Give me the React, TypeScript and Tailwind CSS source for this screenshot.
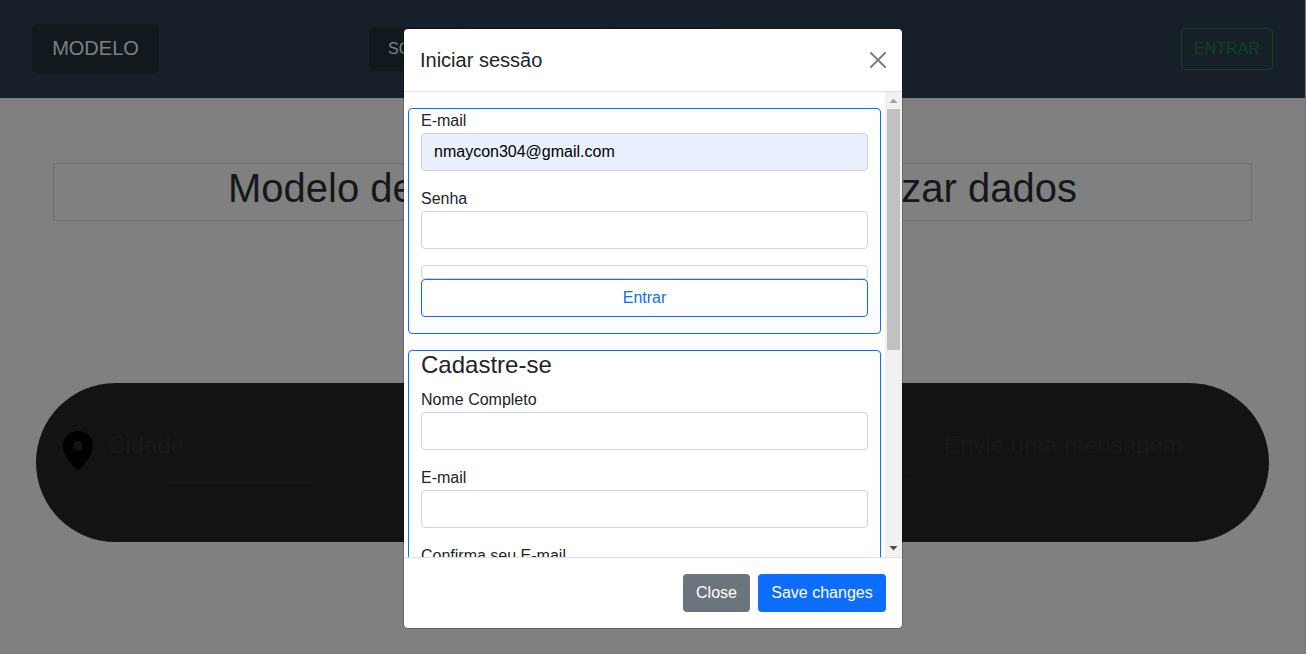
import React from "react";

function Field({ label, value }: { label: string; value?: string }) {
  return (
    <div className="mb-4">
      <label className="block h-6 leading-6">{label}</label>
      <div
        className={
          value
            ? "h-[38px] rounded border border-[#ced4da] bg-[#e8f0fe] px-3 py-1.5 leading-6 text-black"
            : "h-[38px] rounded border border-[#ced4da] bg-white"
        }
      >
        {value}
      </div>
    </div>
  );
}

function NavBar() {
  return (
    <header className="flex h-[98px] items-start bg-[#171f28] pl-8 pr-8 text-[#808080]">
      <div className="mt-6 flex h-[50px] w-[127px] items-center justify-center rounded-md bg-[#11191f] pb-0.5 text-xl">
        MODELO
      </div>
      <nav className="ml-[210px] mt-[27px] flex h-11">
        <div className="flex w-24 items-center rounded-md bg-[#11191f] pl-[19px] text-base">SO</div>
        <div className="w-[142px] rounded-md bg-[#11191f]" />
        <div className="w-28 rounded-md bg-[#11191f]" />
      </nav>
      <button className="ml-auto mt-7 h-[42px] w-[92px] rounded border border-[#0c432a] text-[#0c432a]">
        ENTRAR
      </button>
    </header>
  );
}

function Scrollbar() {
  return (
    <div className="flex w-[17px] shrink-0 flex-col items-center bg-[#f1f1f1]">
      <svg className="h-[17px] w-[17px] shrink-0" viewBox="0 0 17 17">
        <path d="M4.5 11L8.5 6.5L12.5 11Z" fill="#a3a3a3" />
      </svg>
      <div className="h-[241px] w-[13px] bg-[#c1c1c1]" />
      <svg className="mt-auto h-[17px] w-[17px] shrink-0" viewBox="0 0 17 17">
        <path d="M4.5 6L8.5 10.5L12.5 6Z" fill="#505050" />
      </svg>
    </div>
  );
}

function LoginModal() {
  return (
    <div className="absolute left-[403px] top-7 flex h-[601px] w-[500px] flex-col rounded-[5px] border border-black/20 bg-white bg-clip-padding text-[#212529]">
      <div className="flex h-[63px] shrink-0 items-center justify-between border-b border-[#dee2e6] px-4">
        <h5 className="text-xl leading-[30px]">Iniciar sessão</h5>
        <svg className="h-4 w-4 opacity-50" viewBox="0 0 16 16" fill="#000">
          <path d="M.293.293a1 1 0 011.414 0L8 6.586 14.293.293a1 1 0 111.414 1.414L9.414 8l6.293 6.293a1 1 0 01-1.414 1.414L8 9.414l-6.293 6.293a1 1 0 01-1.414-1.414L6.586 8 .293 1.707a1 1 0 010-1.414z" />
        </svg>
      </div>
      <div className="flex h-[465px] shrink-0 overflow-hidden">
        <div className="flex-1 px-1 pt-4">
          <section className="h-[226px] rounded border border-[#0d6efd] px-3">
            <Field label="E-mail" value="nmaycon304@gmail.com" />
            <Field label="Senha" />
            <div className="h-3.5 rounded border border-[#ced4da]" />
            <button className="block h-[38px] w-full rounded border border-[#0d6efd] text-[#0d6efd]">
              Entrar
            </button>
          </section>
          <section className="mt-4 h-[400px] rounded border border-[#0d6efd] px-3">
            <h4 className="mb-2 h-[29px] text-2xl leading-[28.8px]">Cadastre-se</h4>
            <Field label="Nome Completo" />
            <Field label="E-mail" />
            <Field label="Confirma seu E-mail" />
          </section>
        </div>
        <Scrollbar />
      </div>
      <div className="flex flex-1 items-start justify-end gap-2 border-t border-[#dee2e6] px-4 pt-4 text-white">
        <button className="h-[38px] w-[67px] rounded bg-[#6c757d]">Close</button>
        <button className="h-[38px] w-32 rounded bg-[#0d6efd]">Save changes</button>
      </div>
    </div>
  );
}

export default function App() {
  return (
    <div className="relative h-[654px] w-[1306px] overflow-hidden border-r border-[#70787f] bg-[#808080] font-['Liberation_Sans',Arial,sans-serif] text-base">
      <NavBar />
      <h1 className="ml-[53px] mt-[65px] flex h-[58px] w-[1199px] justify-between border border-[#6f7071] pl-[174px] pr-[174px] text-[40px] leading-12 text-[#15171a]">
        <span>Modelo de</span>
        <span>zar dados</span>
      </h1>
      <div className="ml-9 mt-[162px] flex h-[159px] w-[1233px] items-start rounded-[80px] bg-[#111315] pl-[27px] pr-[84px] pt-11 text-[#17191a]">
        <svg className="mt-1 h-10 w-[30px]" viewBox="0 0 30 40">
          <path
            fillRule="evenodd"
            fill="#000"
            d="M15 0C6.7 0 0 6.5 0 14.8C0 24 9 34 15 39.5C21 34 30 24 30 14.8C30 6.5 23.3 0 15 0ZM15 10A4.9 4.9 0 1 1 15 19.8A4.9 4.9 0 0 1 15 10Z"
          />
        </svg>
        <div className="ml-[15px]">
          <div className="text-2xl leading-9">Cidade</div>
          <div className="ml-[60px] mt-[7px] leading-6">----------------------------</div>
        </div>
        <div className="ml-auto w-[284px]">
          <div className="pl-[43px] text-2xl leading-9 whitespace-nowrap">Envie uma mensagem</div>
          <div className="mt-1 leading-6">--</div>
        </div>
      </div>
      <LoginModal />
    </div>
  );
}
